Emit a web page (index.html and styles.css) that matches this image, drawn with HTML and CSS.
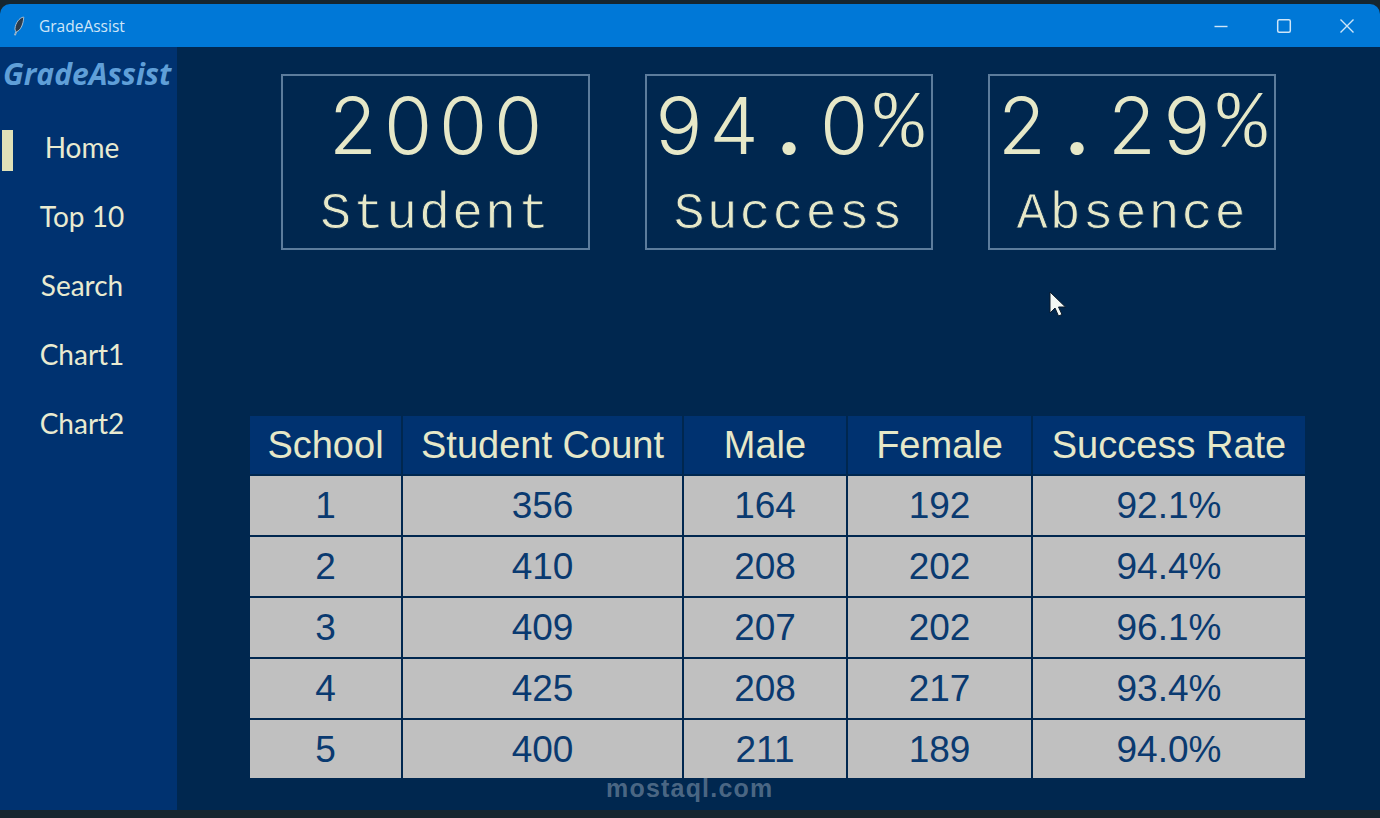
FILE: index.html
```html
<!DOCTYPE html>
<html lang="en">
<head>
<meta charset="utf-8">
<title>GradeAssist</title>
<link rel="stylesheet" href="styles.css">
</head>
<body>
<div class="window">
  <header class="titlebar">
    <svg class="app-icon" width="14" height="20" viewBox="0 0 14 20"><path d="M11.500 1C7 2 3.500 7 3 12.500c-.1 1.300.2 2.300.9 2.700L2.600 19l.8.2 1.300-3.600c3.400-.8 6.600-6.600 7-14.200z" fill="#2b3a4a" stroke="#c4d4e2" stroke-width=".8"/></svg>
    <span class="app-name">GradeAssist</span>
    <div class="controls">
      <svg class="ctl" width="16" height="16" viewBox="0 0 16 16"><path d="M1.500 8.500h13" stroke="#cfe6f8" stroke-width="1.400"/></svg>
      <svg class="ctl" width="16" height="16" viewBox="0 0 16 16"><rect x="1.700" y="1.700" width="12.600" height="12.600" rx="1.500" fill="none" stroke="#cfe6f8" stroke-width="1.500"/></svg>
      <svg class="ctl" width="16" height="16" viewBox="0 0 16 16"><path d="M1.500 1.500l13 13M14.500 1.500l-13 13" stroke="#cfe6f8" stroke-width="1.400"/></svg>
    </div>
  </header>
  <div class="body">
    <aside class="sidebar">
      <div class="brand">GradeAssist</div>
      <nav class="nav">
        <a class="nav-item active">Home</a>
        <a class="nav-item">Top 10</a>
        <a class="nav-item">Search</a>
        <a class="nav-item">Chart1</a>
        <a class="nav-item">Chart2</a>
      </nav>
    </aside>
    <main class="main">
      <section class="stats">
        <div class="stat stat-wide">
          <div class="stat-value"><span class="ch">2</span><span class="ch">0</span><span class="ch">0</span><span class="ch">0</span></div>
          <div class="stat-label">Student</div>
        </div>
        <div class="stat">
          <div class="stat-value"><span class="ch">9</span><span class="ch">4</span><span class="ch dot">.</span><span class="ch">0</span><span class="ch pct">%</span></div>
          <div class="stat-label">Success</div>
        </div>
        <div class="stat">
          <div class="stat-value"><span class="ch">2</span><span class="ch dot">.</span><span class="ch">2</span><span class="ch">9</span><span class="ch pct">%</span></div>
          <div class="stat-label">Absence</div>
        </div>
      </section>
      <table class="grades">
        <colgroup><col class="c1"><col class="c2"><col class="c3"><col class="c4"><col class="c5"></colgroup>
        <thead><tr><th>School</th><th>Student Count</th><th>Male</th><th>Female</th><th>Success Rate</th></tr></thead>
        <tbody>
          <tr><td>1</td><td>356</td><td>164</td><td>192</td><td>92.1%</td></tr>
          <tr><td>2</td><td>410</td><td>208</td><td>202</td><td>94.4%</td></tr>
          <tr><td>3</td><td>409</td><td>207</td><td>202</td><td>96.1%</td></tr>
          <tr><td>4</td><td>425</td><td>208</td><td>217</td><td>93.4%</td></tr>
          <tr><td>5</td><td>400</td><td>211</td><td>189</td><td>94.0%</td></tr>
        </tbody>
      </table>
    </main>
  </div>
  <svg class="cursor" width="18" height="28" viewBox="0 0 18 28"><path d="M2 2v21l5-5 3.500 8 3.500-1.500-3.500-7.500h7z" fill="#f4f8f4" stroke="#0b1b2c" stroke-width="1"/></svg>
  <div class="watermark">mostaql.com</div>
</div>
</body>
</html>
```
FILE: styles.css
```css
* { box-sizing: border-box; }
html, body { margin: 0; height: 100%; }
body { background: #16262f; overflow: hidden; }
.window {
  position: relative;
  width: 1380px;
  height: 818px;
  padding: 4px 0 8px;
  display: flex;
  flex-direction: column;
  background: #16262f;
}
.titlebar {
  height: 43px;
  flex: none;
  display: flex;
  align-items: center;
  background: #0078d7;
  border-radius: 10px 10px 0 0;
  padding-left: 12px;
}
.app-icon { flex: none; }
.app-name {
  margin-left: 13px;
  font: 15.500px "Open Sans", "Liberation Sans", sans-serif;
  color: #cfe6f8;
}
.controls {
  margin-left: auto;
  display: flex;
  gap: 47px;
  padding-right: 25px;
}
.body { flex: 1; display: flex; min-height: 0; }
.sidebar {
  width: 177px;
  flex: none;
  background: #003270;
  padding-top: 10px;
}
.brand {
  font: italic 700 30px/34px "Open Sans", sans-serif;
  color: #5f9fd8;
  padding-left: 3px;
  white-space: nowrap;
}
.nav { margin-top: 36px; display: flex; flex-direction: column; gap: 28px; }
.nav-item {
  position: relative;
  height: 41px;
  font: 28px/41px "Lato", sans-serif;
  color: #e9ebd0;
  text-align: center;
  padding-right: 13px;
}
.nav-item.active::before {
  content: "";
  position: absolute;
  left: 2px;
  top: 3px;
  width: 11px;
  height: 41px;
  background: #dfe1b8;
}
.main {
  flex: 1;
  background: #00274f;
  padding: 27px 0 0 73px;
}
.stats {
  display: flex;
  gap: 55px;
  padding-left: 31px;
}
.stat {
  width: 288px;
  height: 176px;
  border: 2px solid #5c7c9c;
  color: #e6e8c8;
  text-align: center;
}
.stat-wide { width: 309px; }
.stat-value {
  display: flex;
  justify-content: center;
  height: 100px;
  font: 300 78px/100px "Inter", sans-serif;
}
.ch { width: 55px; text-align: center; }
.dot { font-weight: 700; }
.pct {
  font-family: "Liberation Mono", monospace;
  font-size: 84px;
  font-weight: 400;
  -webkit-text-stroke: 1.500px #00274f;
}
.stat-label {
  font: 52px/56px "Liberation Mono", monospace;
  letter-spacing: 1.800px;
  margin-top: 11px;
  -webkit-text-stroke: .8px #00274f;
}
.grades {
  margin-top: 166px;
  width: 1055px;
  table-layout: fixed;
  border-collapse: separate;
  border-spacing: 0;
  font-family: "Liberation Sans", sans-serif;
  font-size: 37px;
  text-align: center;
}
.c1 { width: 153px; }
.c2 { width: 281px; }
.c3 { width: 164px; }
.c4 { width: 185px; }
.c5 { width: 272px; }
.grades th {
  height: 60px;
  padding: 0;
  font-size: 38px;
  font-weight: 400;
  background: #003270;
  color: #e6e8c8;
  border-right: 2px solid #00274f;
  border-bottom: 2px solid #00274f;
}
.grades td {
  height: 61px;
  padding: 0;
  background: #c0c0c0;
  color: #0a3a70;
  border-right: 2px solid #00274f;
  border-bottom: 2px solid #00274f;
}
.grades th:last-child, .grades td:last-child { border-right: 0; }
.grades tbody tr:last-child td { border-bottom: 0; height: 58px; padding-top: 1px; }
.cursor { position: absolute; left: 1048px; top: 290px; }
.watermark {
  position: absolute;
  left: 606px;
  top: 773px;
  font: 700 25px/30px "Liberation Sans", sans-serif;
  letter-spacing: 1.200px;
  color: rgba(170, 185, 200, .45);
}
```
